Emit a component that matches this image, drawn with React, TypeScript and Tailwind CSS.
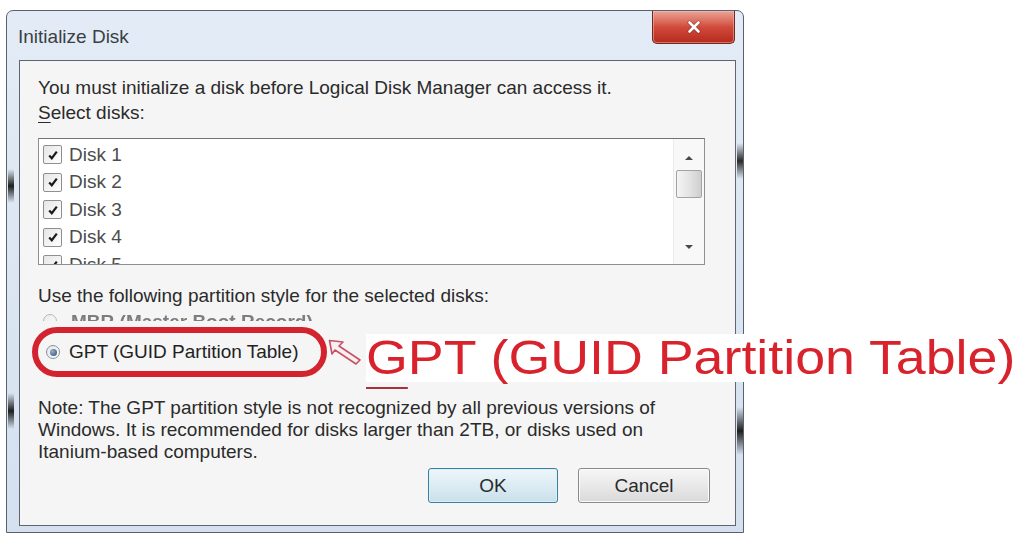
import { Fragment } from 'react'

const disks = ['Disk 1', 'Disk 2', 'Disk 3', 'Disk 4', 'Disk 5']

function CheckBox() {
  return (
    <div className="flex h-[19px] w-[19px] items-center justify-center rounded-[2px] border border-[#8e8f8f] bg-gradient-to-br from-[#e6e6e6] to-white">
      <svg viewBox="0 0 12 12" className="h-[12px] w-[12px]">
        <path d="M2.2 6.4 L4.8 9.2 L9.8 2.6" fill="none" stroke="#1b1b1b" strokeWidth="2.2" />
      </svg>
    </div>
  )
}

function Radio({ on }: { on?: boolean }) {
  return (
    <div className="flex h-[14px] w-[14px] shrink-0 items-center justify-center rounded-full border border-[#8a8f96] bg-gradient-to-br from-[#e4e4e4] to-white">
      {on && <div className="h-[7px] w-[7px] rounded-full bg-[radial-gradient(circle_at_35%_35%,#8fb0d0,#2c4b6c)]" />}
    </div>
  )
}

function Button({ label, primary }: { label: string; primary?: boolean }) {
  return (
    <div
      className={
        primary
          ? 'flex h-[35px] w-[130px] items-center justify-center rounded-[3px] border border-[#3d7f9c] bg-gradient-to-b from-[#eef6fa] via-[#dcecf3] to-[#c9e0ea] shadow-[inset_0_0_0_1px_#d8f0fa]'
          : 'flex h-[35px] w-[132px] items-center justify-center rounded-[3px] border border-[#8a8a8a] bg-gradient-to-b from-[#f6f6f6] via-[#e9e9e9] to-[#d9d9d9] shadow-[inset_0_0_0_1px_#fbfbfb]'
      }
    >
      {label}
    </div>
  )
}

export default function App() {
  return (
    <div className="relative h-[539px] w-[1031px] overflow-hidden bg-white font-['Liberation_Sans',Arial,sans-serif] text-[19px] leading-[22px] text-[#2b2b2b]">
      {/* window frame */}
      <div className="relative ml-[6px] mt-[10px] flex h-[523px] w-[738px] flex-col rounded-t-[7px] border border-[#596170] bg-gradient-to-b from-[#e3ecf6] via-[#dbe6f2] to-[#d4e0ee] pb-[6px] pl-[12px] pr-[7px]">
        {/* dark glass streaks on the frame */}
        <div className="absolute left-[1px] top-[158px] h-[34px] w-[6px] bg-gradient-to-b from-transparent via-[#1e1e1e] to-transparent" />
        <div className="absolute left-[1px] top-[382px] h-[36px] w-[6px] bg-gradient-to-b from-transparent via-[#1e1e1e] to-transparent" />
        <div className="absolute right-[0px] top-[132px] h-[36px] w-[6px] bg-gradient-to-b from-transparent via-[#2a2a2a] to-transparent" />
        <div className="absolute right-[0px] top-[396px] h-[48px] w-[6px] bg-gradient-to-b from-transparent via-[#1e1e1e] to-transparent" />

        {/* title bar */}
        <div className="flex h-[49px] items-start justify-between">
          <div className="-ml-[1px] mt-[15px] text-[#3a3f44]">Initialize Disk</div>
          <div className="mr-[1px] flex h-[33px] w-[83px] items-center justify-center rounded-b-[5px] border border-t-0 border-[#6d2a24] bg-gradient-to-b from-[#e9a497] via-[#d24a3c] to-[#b52a1c] shadow-[inset_0_0_0_1px_rgba(255,200,190,0.45)]">
            <svg viewBox="0 0 14 14" className="h-[14px] w-[14px]">
              <path d="M2.5 2.5 L11.5 11.5 M11.5 2.5 L2.5 11.5" stroke="#5a1a12" strokeWidth="4" strokeLinecap="round" opacity="0.45" />
              <path d="M2.5 2.5 L11.5 11.5 M11.5 2.5 L2.5 11.5" stroke="#ffffff" strokeWidth="2.6" strokeLinecap="round" />
            </svg>
          </div>
        </div>

        {/* content panel */}
        <div className="flex flex-1 flex-col border border-[#5e6570] bg-[#f5f5f5] pl-[18px] pr-[25px]">
          <div className="mt-[16px] whitespace-nowrap">You must initialize a disk before Logical Disk Manager can access it.</div>
          <div className="mt-[3px]">
            <span className="underline decoration-1 underline-offset-[3px]">S</span>elect disks:
          </div>

          {/* disk list */}
          <div className="mt-[14px] flex h-[127px] w-[667px] border border-[#8b8f96] border-t-[#6f737a] bg-white">
            <div className="flex-1 overflow-hidden pl-[4px] pt-[2px]">
              {disks.map(d => (
                <div key={d} className="flex h-[27.5px] items-center gap-[7px] text-[#4c4c4c]">
                  <CheckBox />
                  <span>{d}</span>
                </div>
              ))}
            </div>
            <div className="flex w-[31px] flex-col items-center border-l border-[#ececec] bg-[#f8f8f8]">
              <svg viewBox="0 0 10 6" className="mt-[16px] h-[6px] w-[10px]">
                <path d="M1 5 L5 1 L9 5 Z" fill="#4a4a4a" />
              </svg>
              <div className="mt-[9px] h-[28px] w-[26px] rounded-[2px] border border-[#a3a3a3] bg-gradient-to-r from-[#f4f4f4] via-[#e4e4e4] to-[#cfcfcf]" />
              <div className="flex-1" />
              <svg viewBox="0 0 10 6" className="mb-[14px] h-[6px] w-[10px]">
                <path d="M1 1 L9 1 L5 5 Z" fill="#4a4a4a" />
              </svg>
            </div>
          </div>

          <div className="mt-[20px] whitespace-nowrap">Use the following partition style for the selected disks:</div>

          {/* MBR option, half hidden */}
          <div className="mt-[4px] flex h-[10px] items-start overflow-hidden pl-[5px] text-[#7d7d7d] blur-[0.4px]">
            <div className="mt-[3px] opacity-60">
              <Radio />
            </div>
            <span className="ml-[14px] font-bold">MBR (Master Boot Record)</span>
          </div>

          {/* GPT option with annotation */}
          <div className="-ml-[6px] mt-[6px] flex h-[50px] items-center">
            <div className="flex h-[50px] w-[295px] shrink-0 items-center rounded-full border-[6px] border-[#d2232f] pl-[8px]">
              <Radio on />
              <span className="ml-[9px] whitespace-nowrap text-[#222]">GPT (GUID Partition Table)</span>
            </div>
            <svg viewBox="0 0 33 26" className="ml-[1px] h-[26px] w-[33px] shrink-0">
              <polygon points="1.5,1.5 15,3 11,7 32,21 28,25 7,11 4,15" fill="#fbeef0" stroke="#c25467" strokeWidth="1.6" strokeLinejoin="round" />
            </svg>
            <span className="ml-[5px] origin-left translate-y-[6px] scale-x-[1.12] whitespace-nowrap bg-white text-[48px] leading-none text-[#d8232d]">
              <span className="underline decoration-[#a8323c] decoration-2 underline-offset-[13px]">G</span>PT (GUID Partition Table)
            </span>
          </div>

          <div className="mt-[20px] whitespace-nowrap">
            {[
              'Note: The GPT partition style is not recognized by all previous versions of',
              'Windows. It is recommended for disks larger than 2TB, or disks used on',
              'Itanium-based computers.',
            ].map((l, i) => (
              <Fragment key={i}>
                {l}
                <br />
              </Fragment>
            ))}
          </div>

          <div className="mt-[5px] flex justify-end gap-[20px]">
            <Button label="OK" primary />
            <Button label="Cancel" />
          </div>
        </div>
      </div>
    </div>
  )
}
